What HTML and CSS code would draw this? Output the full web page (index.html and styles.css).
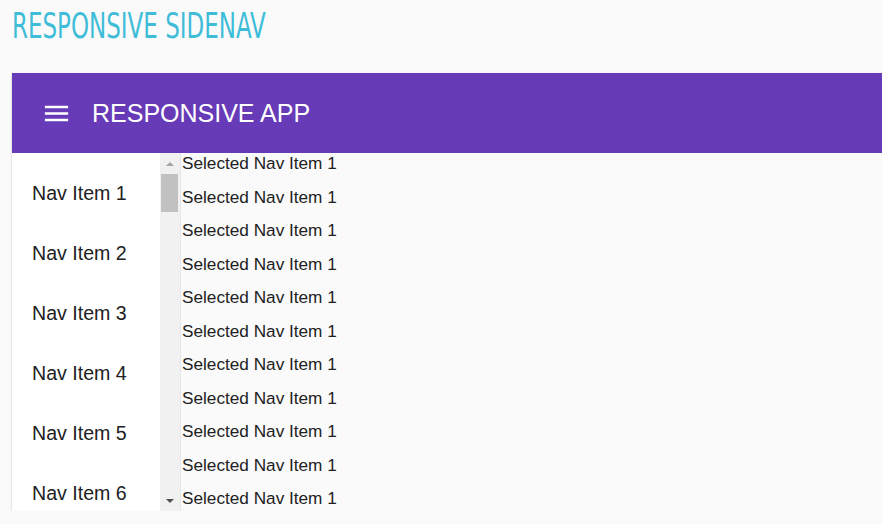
FILE: index.html
```html
<!DOCTYPE html>
<html>
<head>
<meta charset="utf-8">
<link rel="stylesheet" href="styles.css">
</head>
<body>
<h1 class="page-title">RESPONSIVE SIDENAV</h1>
<div class="card">
  <header class="toolbar">
    <svg class="menu-icon" viewBox="0 0 24 24" width="31" height="31"><path fill="#fff" d="M3 18h18v-2H3v2zm0-5h18v-2H3v2zm0-7v2h18V6H3z"/></svg>
    <span class="app-title">RESPONSIVE APP</span>
  </header>
  <div class="container">
    <nav class="sidenav">
      <ul class="nav-list">
        <li>Nav Item 1</li>
        <li>Nav Item 2</li>
        <li>Nav Item 3</li>
        <li>Nav Item 4</li>
        <li>Nav Item 5</li>
        <li class="last">Nav Item 6</li>
      </ul>
      <div class="scrollbar">
        <div class="arrow up"></div>
        <div class="track"><div class="thumb"></div></div>
        <div class="arrow down"></div>
      </div>
    </nav>
    <main class="content">
      <p>Selected Nav Item 1</p>
      <p>Selected Nav Item 1</p>
      <p>Selected Nav Item 1</p>
      <p>Selected Nav Item 1</p>
      <p>Selected Nav Item 1</p>
      <p>Selected Nav Item 1</p>
      <p>Selected Nav Item 1</p>
      <p>Selected Nav Item 1</p>
      <p>Selected Nav Item 1</p>
      <p>Selected Nav Item 1</p>
      <p>Selected Nav Item 1</p>
    </main>
  </div>
</div>
</body>
</html>
```
FILE: styles.css
```css
html, body {
  margin: 0;
  padding: 0;
  background: #fafafa;
  overflow: hidden;
}
body {
  padding-left: 12px;
  font-family: "Liberation Sans", Arial, sans-serif;
}
.page-title {
  margin: 0;
  padding-top: 6px;
  height: 73px;
  box-sizing: border-box;
  font-family: "Liberation Sans Narrow", "DejaVu Sans Condensed", sans-serif;
  font-weight: normal;
  font-size: 35px;
  line-height: 40px;
  color: #3fbdd8;
  transform: scaleX(0.73);
  transform-origin: left top;
  white-space: nowrap;
}
.card {
  background: #fafafa;
  box-shadow: 0 2px 1px -1px rgba(0,0,0,.2), 0 1px 1px 0 rgba(0,0,0,.14), 0 1px 3px 0 rgba(0,0,0,.12);
}
.toolbar {
  height: 80px;
  background: #673ab7;
  display: flex;
  align-items: center;
  padding-left: 29px;
  color: #fff;
}
.menu-icon {
  display: block;
  flex: none;
}
.app-title {
  margin-left: 20px;
  font-size: 25px;
  font-family: "Liberation Sans", Arial, sans-serif;
}
.container {
  display: flex;
  height: 358px;
}
.sidenav {
  display: flex;
  background: #fff;
  border-right: 1px solid #e6e6e6;
  flex: none;
}
.nav-list {
  list-style: none;
  margin: 0;
  padding: 28px 0 0 0;
  width: 148px;
  overflow: hidden;
  box-sizing: border-box;
}
.nav-list li {
  height: 24px;
  line-height: 24px;
  margin-bottom: 36px;
  padding-left: 20px;
  font-size: 19.6px;
  color: #212121;
  white-space: nowrap;
}
.nav-list li.last {
  margin-bottom: 0;
}
.scrollbar {
  width: 20px;
  background: #f1f1f1;
  display: flex;
  flex-direction: column;
}
.arrow {
  height: 21px;
  display: flex;
  align-items: center;
  justify-content: center;
}
.arrow::before {
  content: "";
  width: 0;
  height: 0;
  border-left: 4px solid transparent;
  border-right: 4px solid transparent;
}
.arrow.up::before {
  border-bottom: 4px solid #a3a3a3;
}
.arrow.down::before {
  border-top: 4px solid #505050;
}
.track {
  flex: 1;
}
.thumb {
  margin-left: 1px;
  width: 17px;
  height: 38px;
  background: #c1c1c1;
}
.content {
  flex: 1;
  overflow: hidden;
  padding: 1px 0 0 1px;
}
.content p {
  margin: 0 0 14px 0;
  font-size: 17.2px;
  line-height: 19.5px;
  color: #212121;
  white-space: nowrap;
}
.content p:last-child {
  margin-bottom: 0;
}
```
